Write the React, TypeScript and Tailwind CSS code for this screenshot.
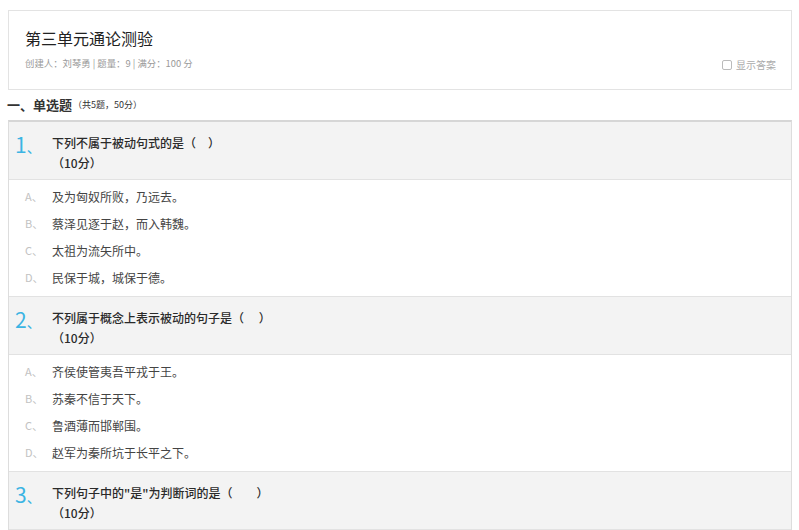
import React from "react";

const font = { fontFamily: '"Noto Sans CJK SC", "Liberation Sans", sans-serif' };

type Q = { n: number; text: string; opts: string[] };

const questions: Q[] = [
  { n: 1, text: "下列不属于被动句式的是（\u3000）", opts: ["及为匈奴所败，乃远去。", "蔡泽见逐于赵，而入韩魏。", "太祖为流矢所中。", "民保于城，城保于德。"] },
  { n: 2, text: "不列属于概念上表示被动的句子是（\u3000 ）", opts: ["齐侯使管夷吾平戎于王。", "苏秦不信于天下。", "鲁酒薄而邯郸围。", "赵军为秦所坑于长平之下。"] },
  { n: 3, text: "下列句子中的\"是\"为判断词的是（\u3000\u3000）", opts: ["甲", "乙", "丙", "丁"] },
];

function Question({ q, last }: { q: Q; last: boolean }) {
  return (
    <div>
      <div className={`flex bg-[#f3f3f3] pt-[11px] pb-[6px] ${q.n > 1 ? "border-t border-[#dcdcdc]" : ""} border-b border-[#e2e2e2]`}>
        <div className="w-[43px] pl-[6px] text-[21px] leading-[22px] text-[#3bb4e3]">{q.n}<span className="text-[14px]">、</span></div>
        <div className="text-[12px] leading-[20px] text-[#2a2a2a] font-medium">
          <div>{q.text}</div>
          <div>（10分）</div>
        </div>
      </div>
      {!last && (
        <div className="pt-[3px] pb-[5px] bg-white">
          {q.opts.map((o, i) => (
            <div key={i} className="flex h-[27px] items-center">
              <div className="w-[43px] pl-[16px] text-[11px] text-[#c2c2c2]">{"ABCD"[i]}、</div>
              <div className="text-[12px] text-[#444]">{o}</div>
            </div>
          ))}
        </div>
      )}
    </div>
  );
}

export default function App() {
  return (
    <div className="w-[799px] h-[530px] overflow-hidden bg-white" style={font}>
      <div className="pl-[8px] pr-[7px] pt-[10px]">
        <div className="border border-[#e3e3e3] h-[80px] px-[16px] pt-[16px] relative">
          <div className="text-[16px] leading-[22px] text-[#222]">第三单元通论测验</div>
          <div className="mt-[7px] text-[9.4px] leading-[14px] text-[#999]">创建人：刘琴勇 | 题量：9 | 满分：100 分</div>
          <div className="absolute right-[15px] top-[46px] flex items-center gap-[4px] text-[10px] text-[#aaa]">
            <span className="inline-block w-[10px] h-[10px] border border-[#bbb] rounded-[2px]" />
            显示答案
          </div>
        </div>
        <div className="h-[29px] flex items-center mt-[0px] -ml-[1px]">
          <span className="text-[13px] font-bold text-[#333]">一、单选题</span>
          <span className="text-[9px] text-[#333] ml-[1px]">（共5题，50分）</span>
        </div>
        <div className="border border-[#dddddd] border-t-2 border-t-[#d6d6d6] mt-[1px]">
          {questions.map((q, i) => (
            <Question key={q.n} q={q} last={i === questions.length - 1} />
          ))}
        </div>
      </div>
    </div>
  );
}
